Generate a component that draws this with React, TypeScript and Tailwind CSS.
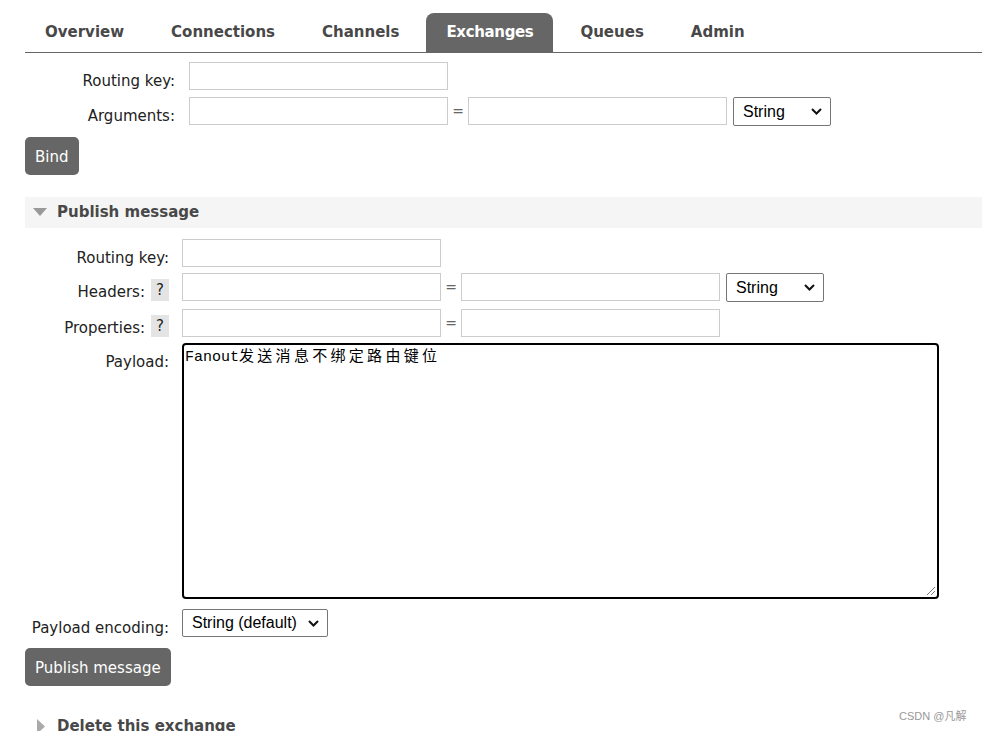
import React from 'react';

const tabs = ['Overview', 'Connections', 'Channels', 'Exchanges', 'Queues', 'Admin'];

const Chevron = () => (
  <svg width="11" height="7" viewBox="0 0 11 7" className="ml-auto">
    <polyline points="1,1 5.5,5.5 10,1" fill="none" stroke="#111" strokeWidth="2" />
  </svg>
);

const FakeSelect: React.FC<{ value: string; width: string }> = ({ value, width }) => (
  <div
    className={`${width} h-[29px] flex items-center pl-[9px] pr-[8px] border border-[#767676] rounded-[2px] bg-white text-[16px] text-black`}
    style={{ fontFamily: '"Liberation Sans", Arial, sans-serif' }}
  >
    <span>{value}</span>
    <Chevron />
  </div>
);

const Field = () => <div className="w-[259px] h-[28px] border border-[#ccc] bg-white" />;

const Eq = () => <span className="w-[20px] text-center text-[#666] text-[14px] leading-[28px]">=</span>;

const Help = () => (
  <span className="ml-[6px] inline-flex w-[18px] h-[22px] items-center justify-center bg-[#e4e4e4] text-[#222] text-[15px]">?</span>
);

const Label: React.FC<{ width: string; children: React.ReactNode }> = ({ width, children }) => (
  <div className={`${width} shrink-0 flex justify-end items-start pt-[10px] leading-[18px] text-[15px] text-[#222]`}>
    {children}
  </div>
);

export default function App() {
  return (
    <div
      className="relative w-[982px] h-[731px] overflow-hidden bg-white"
      style={{ fontFamily: '"DejaVu Sans", Verdana, sans-serif' }}
    >
      {/* tabs */}
      <div className="ml-[25px] mt-[13px] flex gap-[7px] border-b border-[#666]">
        {tabs.map((t) => (
          <div
            key={t}
            className={
              t === 'Exchanges'
                ? 'h-[39px] px-5 flex items-center rounded-t-[8px] bg-[#666] text-white font-bold text-[15px] tracking-[-0.35px]'
                : 'h-[39px] px-5 flex items-center text-[#484848] font-bold text-[15px]'
            }
          >
            {t}
          </div>
        ))}
      </div>

      {/* bind form */}
      <div className="ml-[25px] mt-[9px]">
        <div className="flex items-start">
          <Label width="w-[150px]">Routing key:</Label>
          <div className="ml-[14px]">
            <Field />
          </div>
        </div>
        <div className="flex items-start mt-[7px]">
          <Label width="w-[150px]">Arguments:</Label>
          <div className="ml-[14px] flex items-start">
            <Field />
            <Eq />
            <Field />
            <div className="ml-[6px]">
              <FakeSelect value="String" width="w-[98px]" />
            </div>
          </div>
        </div>
        <button className="mt-[11px] h-[38px] px-[10px] rounded-[5px] bg-[#666] text-white text-[15px] leading-[20px] pt-[1px]">Bind</button>
      </div>

      {/* publish section */}
      <div className="ml-[25px] mt-[22px] h-[31px] bg-[#f5f5f5] flex items-center">
        <svg width="14" height="9" viewBox="0 0 14 9" className="ml-[8px]">
          <polygon points="0,0 14,0 7,8" fill="#999" />
        </svg>
        <span className="ml-[10px] font-bold text-[15px] text-[#484848]">Publish message</span>
      </div>

      <div className="ml-[25px] mt-[11px]">
        <div className="flex items-start">
          <Label width="w-[144px]">Routing key:</Label>
          <div className="ml-[13px]">
            <Field />
          </div>
        </div>
        <div className="flex items-start mt-[6px]">
          <Label width="w-[144px]">
            <span>Headers:</span>
            <span className="-mt-[4px]"><Help /></span>
          </Label>
          <div className="ml-[13px] flex items-start">
            <Field />
            <Eq />
            <Field />
            <div className="ml-[6px]">
              <FakeSelect value="String" width="w-[98px]" />
            </div>
          </div>
        </div>
        <div className="flex items-start mt-[7px]">
          <Label width="w-[144px]">
            <span>Properties:</span>
            <span className="-mt-[4px]"><Help /></span>
          </Label>
          <div className="ml-[13px] flex items-start">
            <Field />
            <Eq />
            <Field />
          </div>
        </div>
        <div className="flex items-start mt-[6px]">
          <Label width="w-[144px]">Payload:</Label>
          <div className="ml-[13px] relative w-[757px] h-[256px] border-2 border-black rounded-[4px] bg-white pl-[1px] pt-[0px] text-[15px] leading-[20px] text-black">
            <span style={{ fontFamily: '"Liberation Mono", "Noto Sans CJK SC", monospace' }}>Fanout</span>
            <span
              className="tracking-[3.3px]"
              style={{ fontFamily: '"Noto Sans CJK SC", sans-serif' }}
            >
              发送消息不绑定路由键位
            </span>
            <svg width="10" height="10" viewBox="0 0 10 10" className="absolute right-[1px] bottom-[1px]">
              <line x1="9" y1="1" x2="1" y2="9" stroke="#777" strokeWidth="1" />
              <line x1="9" y1="5" x2="5" y2="9" stroke="#777" strokeWidth="1" />
            </svg>
          </div>
        </div>
        <div className="flex items-start mt-[10px]">
          <Label width="w-[144px]">Payload encoding:</Label>
          <div className="ml-[13px]">
            <div
              className="w-[146px] h-[28px] flex items-center pl-[9px] pr-[8px] border border-[#767676] rounded-[2px] bg-white text-[16px] text-black"
              style={{ fontFamily: '"Liberation Sans", Arial, sans-serif' }}
            >
              <span>String (default)</span>
              <Chevron />
            </div>
          </div>
        </div>
        <button className="mt-[11px] h-[38px] px-[10px] rounded-[5px] bg-[#666] text-white text-[15px] leading-[20px] pt-[1px]">
          Publish message
        </button>
      </div>

      {/* delete section */}
      <div className="ml-[25px] mt-[28px] h-[24px] flex items-center">
        <svg width="9" height="15" viewBox="0 0 9 15" className="ml-[12px]">
          <polygon points="0,0 8,7.5 0,15" fill="#aaa" />
        </svg>
        <span className="ml-[11px] font-bold text-[15px] text-[#484848]">Delete this exchange</span>
      </div>

      <div
        className="absolute left-[899px] top-[708px] text-[11px] text-[#999]"
        style={{ fontFamily: '"Liberation Sans", "Noto Sans CJK SC", sans-serif' }}
      >
        CSDN @凡解
      </div>
    </div>
  );
}
